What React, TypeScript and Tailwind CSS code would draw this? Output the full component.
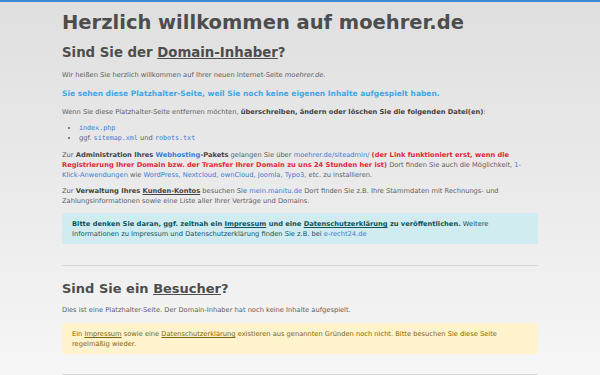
const A = ({ children, bold }: { children: React.ReactNode; bold?: boolean }) => (
    <a className={`text-[#3a7bd5] ${bold ? 'font-bold' : ''}`}>{children}</a>
)

const Code = ({ children }: { children: React.ReactNode }) => (
    <code className="text-[#3a7bd5] font-['DejaVu_Sans_Mono',monospace]">{children}</code>
)

export default function App() {
    return (
        <div className="min-h-[375px] bg-gradient-to-b from-[#dfdfdf] to-[#f6f6f6] border-t-2 border-[#3d86d8] font-['DejaVu_Sans',sans-serif] text-[#5e5e5e]">
            <div className="ml-[62px] w-[476px] text-[6.7px] leading-[10px]">
                <h1 className="pt-[10px] text-[19.5px] leading-[22px] font-bold text-[#4d4d4d]">Herzlich willkommen auf moehrer.de</h1>

                <h2 className="mt-[11px] text-[13.3px] leading-[16px] font-bold text-[#4d4d4d]">
                    Sind Sie der <span className="underline">Domain-Inhaber</span>?
                </h2>

                <p className="mt-[9px]">Wir heißen Sie herzlich willkommen auf Ihrer neuen Internet-Seite <i>moehrer.de</i>.</p>

                <p className="mt-[7.5px] text-[7.5px] leading-[11px] font-bold text-[#3fa6e8]">
                    Sie sehen diese Platzhalter-Seite, weil Sie noch keine eigenen Inhalte aufgespielt haben.
                </p>

                <p className="mt-[8.5px]">
                    Wenn Sie diese Platzhalter-Seite entfernen möchten, <b className="text-[#444]">überschreiben, ändern oder löschen Sie die folgenden Datei(en)</b>:
                </p>

                <ul className="mt-[6px] pl-[17px] list-disc">
                    <li><Code>index.php</Code></li>
                    <li>ggf. <Code>sitemap.xml</Code> und <Code>robots.txt</Code></li>
                </ul>

                <p className="mt-[7px]">
                    Zur <b className="text-[#444]">Administration Ihres <A bold>Webhosting</A>-Pakets</b> gelangen Sie über <A>moehrer.de/siteadmin/</A>{' '}
                    <b className="text-[#e3263b]">(der Link funktioniert erst, wenn die Registrierung Ihrer Domain bzw. der Transfer Ihrer Domain zu uns 24 Stunden her ist)</b>{' '}
                    Dort finden Sie auch die Möglichkeit, <A>1-Klick-Anwendungen</A> wie <A>WordPress</A>, <A>Nextcloud</A>, <A>ownCloud</A>, <A>Joomla</A>, <A>Typo3</A>, etc. zu installieren.
                </p>

                <p className="mt-[6px]">
                    Zur <b className="text-[#444]">Verwaltung Ihres <span className="underline">Kunden-Kontos</span></b> besuchen Sie <A>mein.manitu.de</A> Dort finden Sie z.B. Ihre Stammdaten mit Rechnungs- und Zahlungsinformationen sowie eine Liste aller Ihrer Verträge und Domains.
                </p>

                <div className="mt-[7px] bg-[#d1ecf1] text-[#0c5460] pt-[6px] pb-[5px] px-[10px]">
                    <b>Bitte denken Sie daran, ggf. zeitnah ein <span className="underline">Impressum</span> und eine <span className="underline">Datenschutzerklärung</span> zu veröffentlichen.</b>{' '}
                    Weitere Informationen zu Impressum und Datenschutzerklärung finden Sie z.B. bei <A>e-recht24.de</A>
                </div>

                <hr className="mt-[21px] border-t border-[#d6d6d6]" />

                <h2 className="mt-[15px] text-[13px] leading-[16px] font-bold text-[#4d4d4d]">
                    Sind Sie ein <span className="underline">Besucher</span>?
                </h2>

                <p className="mt-[8px]">Dies ist eine Platzhalter-Seite. Der Domain-Inhaber hat noch keine Inhalte aufgespielt.</p>

                <div className="mt-[8px] bg-[#fff3cd] text-[#856404] pt-[6px] pb-[5px] px-[10px]">
                    Ein <span className="underline">Impressum</span> sowie eine <span className="underline">Datenschutzerklärung</span> existieren aus genannten Gründen noch nicht. Bitte besuchen Sie diese Seite regelmäßig wieder.
                </div>

                <hr className="mt-[20px] border-t border-[#d6d6d6]" />
            </div>
        </div>
    )
}
